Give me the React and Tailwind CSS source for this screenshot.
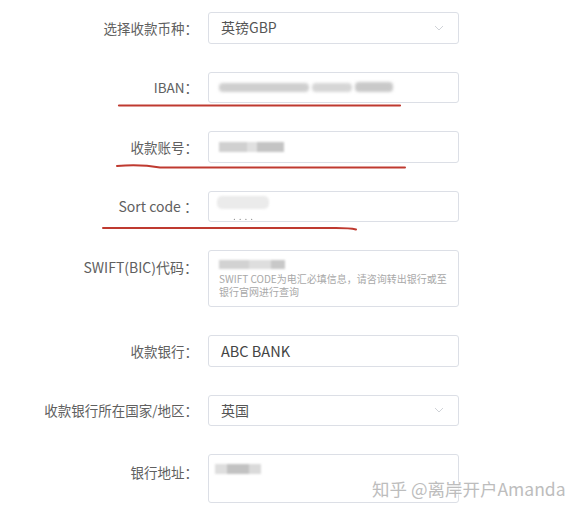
import React from "react";

const font = { fontFamily: '"Noto Sans CJK SC", "Noto Sans", sans-serif' };

function Chevron() {
  return (
    <svg width="10" height="6" viewBox="0 0 10 6" className="absolute right-[14px] top-1/2 -translate-y-1/2">
      <path d="M1 1 L5 5 L9 1" fill="none" stroke="#d0d3d8" strokeWidth="1" />
    </svg>
  );
}

function Row({ label, children, labelClass = "" }) {
  return (
    <div className="flex items-start">
      <div className={`w-[198px] shrink-0 h-[31.5px] flex items-center justify-end text-[13.5px] text-[#606060] whitespace-nowrap ${labelClass}`}>
        {label}
      </div>
      <div className="ml-[10px] w-[251px]">{children}</div>
    </div>
  );
}

function Box({ children, h = "h-[31.5px]", className = "" }) {
  return (
    <div className={`relative ${h} w-full border border-[#dcdfe6] rounded-[3px] bg-white ${className}`}>{children}</div>
  );
}

export default function App() {
  return (
    <div className="relative w-[580px] h-[517px] bg-white overflow-hidden" style={font}>
      <div className="flex flex-col gap-[28px] pt-[12px]">
        <Row label="选择收款币种：">
          <Box className="flex items-center pl-[12px] text-[14px] text-[#555]">
            英镑GBP
            <Chevron />
          </Box>
        </Row>
        <Row label="IBAN：">
          <Box className="flex items-center pl-[10px]">
            <div className="flex items-center gap-[3px] blur-[1.5px]">
              <div className="w-[90px] h-[9px] bg-[#cfcfcf] rounded-sm" />
              <div className="w-[40px] h-[9px] bg-[#d6d6d6] rounded-sm" />
              <div className="w-[38px] h-[10px] bg-[#c9c9c9] rounded-sm" />
            </div>
          </Box>
        </Row>
        <Row label="收款账号：">
          <Box className="flex items-center pl-[10px]">
            <div className="flex items-center blur-[1px]">
              <div className="w-[28px] h-[10px] bg-[#d0d0d0]" />
              <div className="w-[10px] h-[10px] bg-[#e0e0e0]" />
              <div className="w-[27px] h-[10px] bg-[#c4c4c4]" />
            </div>
          </Box>
        </Row>
        <Row label="Sort code ：" labelClass="text-[14px]">
          <Box className="pl-[8px]">
            <div className="absolute left-[8px] top-[4px] w-[52px] h-[13px] bg-[#ebebeb] rounded-[5px] blur-[1px]" />
            <div className="absolute left-[24px] top-[19px] text-[10px] leading-none text-[#888] tracking-[3px] blur-[0.5px]">....</div>
          </Box>
        </Row>
        <Row label="SWIFT(BIC)代码：" labelClass="text-[14px] pt-[4px]">
          <Box h="h-[57px]" className="pl-[10px] pt-[8px]">
            <div className="flex items-center blur-[1px] h-[10px]">
              <div className="w-[30px] h-[9px] bg-[#d2d2d2]" />
              <div className="w-[22px] h-[9px] bg-[#dedede]" />
              <div className="w-[14px] h-[9px] bg-[#c8c8c8]" />
            </div>
            <div className="mt-[3px] text-[10px] leading-[13px] text-[#a8a8a8] whitespace-nowrap">
              SWIFT CODE为电汇必填信息，请咨询转出银行或至
              <br />
              银行官网进行查询
            </div>
          </Box>
        </Row>
        <Row label="收款银行：">
          <Box className="flex items-center pl-[12px] text-[14.5px] text-[#444]">ABC BANK</Box>
        </Row>
        <Row label="收款银行所在国家/地区：">
          <Box className="flex items-center pl-[12px] text-[14px] text-[#555]">
            英国
            <Chevron />
          </Box>
        </Row>
        <Row label="银行地址：" labelClass="pt-[4px]">
          <Box h="h-[49px]" className="pl-[6px] pt-[9px]">
            <div className="flex items-center blur-[1px]">
              <div className="w-[12px] h-[10px] bg-[#dedede]" />
              <div className="w-[22px] h-[10px] bg-[#c2c2c2]" />
              <div className="w-[12px] h-[10px] bg-[#dadada]" />
            </div>
          </Box>
        </Row>
      </div>

      {/* red annotation underlines */}
      <svg className="absolute left-0 top-0 pointer-events-none" width="580" height="517">
        <path d="M119 105.5 L400 105.5" stroke="#bf3a30" strokeWidth="2.2" fill="none" strokeLinecap="round" />
        <path d="M117 166 Q140 164 160 167.5 L405 167.5" stroke="#bf3a30" strokeWidth="2" fill="none" strokeLinecap="round" />
        <path d="M103 228 L336 228 Q350 228 356 229.5" stroke="#bf3a30" strokeWidth="2" fill="none" strokeLinecap="round" />
      </svg>

      {/* watermark */}
      <div
        className="absolute left-[372px] top-[480px] text-[17.5px] leading-none text-[#bdbdbd] whitespace-nowrap"
        style={{ ...font, textShadow: "0 0 2px #fff, 0 0 2px #fff" }}
      >
        知乎 @离岸开户Amanda
      </div>
    </div>
  );
}
